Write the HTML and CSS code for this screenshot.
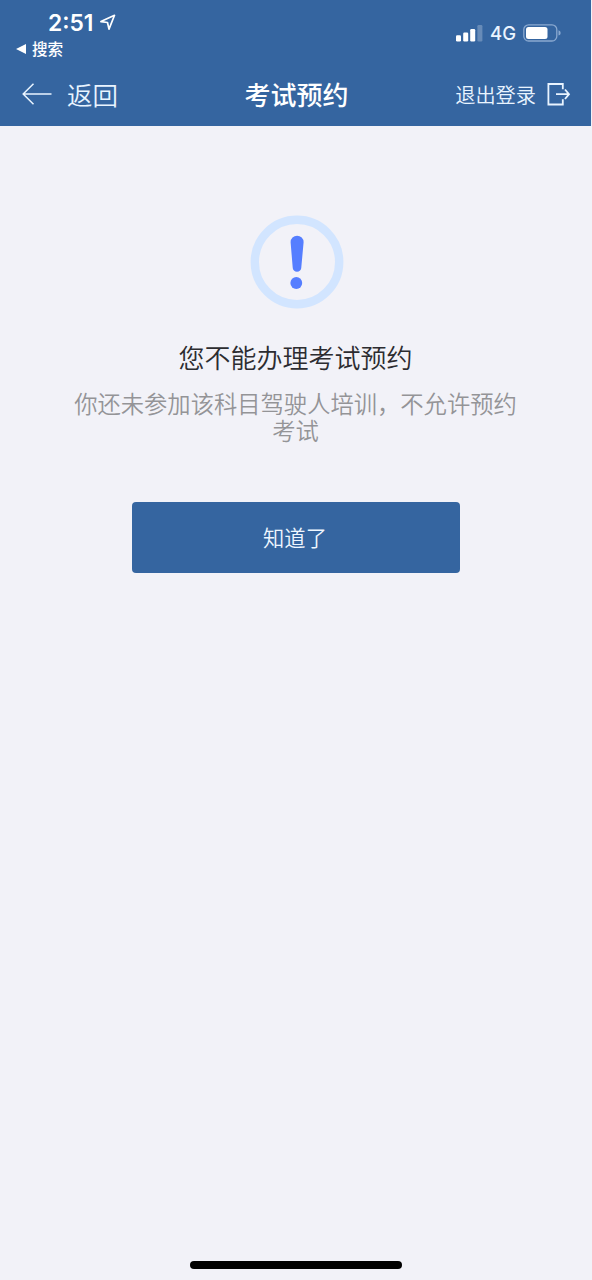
FILE: index.html
```html
<!DOCTYPE html>
<html lang="zh-CN">
<head>
<meta charset="utf-8">
<title>考试预约</title>
<link rel="stylesheet" href="styles.css">
</head>
<body>
<div class="screen">
  <header class="top">
    <div class="status">
      <div class="status-left">
        <div class="clock"><span>2:51</span>
          <svg class="location" width="17" height="17" viewBox="0 0 16 16"><path d="M14.6 1.2 9.4 14.2 8 8 1.8 7.1Z"/></svg>
        </div>
        <div class="return-app">
          <svg width="10" height="10" viewBox="0 0 10 10"><path d="M0 5 10 0V10Z" fill="#fff"/></svg>
          <span>搜索</span>
        </div>
      </div>
      <div class="status-right">
        <svg width="27" height="17" viewBox="0 0 27 17" fill="#fff"><rect y="10.3" width="5" height="6.2" rx="1.2"/><rect x="7.2" y="7.5" width="5" height="9" rx="1.2"/><rect x="14.2" y="4" width="5" height="12.5" rx="1.2"/><rect x="21.4" width="5" height="16.5" rx="1.2" opacity=".25"/></svg>
        <span class="network">4G</span>
        <svg width="38" height="18" viewBox="0 0 38 18"><rect x=".8" y=".8" width="33" height="16.2" rx="4.8" fill="none" stroke="#8aa9d0" stroke-width="1.3"/><rect x="3" y="3" width="21.5" height="12" rx="2.5" fill="#fff"/><path d="M35.5 6.2q2.2.7 2.2 2.7t-2.2 2.7Z" fill="#8aa9d0"/></svg>
      </div>
    </div>
    <nav class="nav">
      <a class="back">
        <svg width="30" height="22" viewBox="0 0 30 22"><path d="M11.5.8 1.2 11 11.5 21.2M1.2 11H29.5"/></svg>
        <span>返回</span>
      </a>
      <h1 class="nav-title">考试预约</h1>
      <a class="logout">
        <span>退出登录</span>
        <svg width="24" height="23" viewBox="0 0 24 23"><path d="M15.8 6.2V1H1.4V21.5H15.8V16.2M9 11.2H21.5M18 6.5 22 11.2 18 16"/></svg>
      </a>
    </nav>
  </header>
  <main class="result">
    <svg class="alert" width="94" height="94" viewBox="0 0 94 94">
      <circle cx="47" cy="47" r="42.2" fill="none" stroke="#d2e5ff" stroke-width="8.4"/>
      <path d="M40.6 27.2a6.5 6.5 0 0 1 13 0L51.3 52.4a4.3 4.3 0 0 1-8.6 0Z" fill="#557eff"/>
      <circle cx="46.3" cy="68" r="5.9" fill="#557eff"/>
    </svg>
    <h2 class="result-title">您不能办理考试预约</h2>
    <p class="message">你还未参加该科目驾驶人培训，不允许预约考试</p>
    <button class="confirm">知道了</button>
  </main>
  <footer class="home"><div class="home-bar"></div></footer>
</div>
</body>
</html>
```
FILE: styles.css
```css
* { box-sizing: border-box; }
body {
  margin: 0;
  background: #f2f2f8;
  font-family: "Noto Sans CJK SC", sans-serif;
}
svg { display: block; flex: none; }
.screen {
  width: 591px;
  height: 1280px;
  display: flex;
  flex-direction: column;
}
.top {
  height: 126px;
  background: #3565a0;
  color: #fff;
}
.status {
  height: 63px;
  display: flex;
  justify-content: space-between;
}
.status-left { padding: 9px 0 0 16px; }
.clock {
  display: flex;
  align-items: center;
  gap: 6px;
  height: 27px;
  padding-left: 32px;
  font: 600 22.8px/27px Inter, sans-serif;
}
.location { fill: none; stroke: #fff; stroke-width: 1.6; stroke-linejoin: round; }
.return-app {
  display: flex;
  align-items: center;
  gap: 6px;
  height: 25px;
  font-size: 15.6px;
  line-height: 25px;
  font-weight: 500;
}
.status-right {
  display: flex;
  align-items: center;
  padding: 3px 30px 0 0;
}
.network {
  width: 26px;
  margin: 0 7px 0 7px;
  font: 500 18.5px/22px Inter, sans-serif;
  color: #eaf4ff;
}
.nav {
  display: grid;
  grid-template-columns: 1fr auto 1fr;
  align-items: center;
  height: 62px;
  padding: 0 20px 0 22px;
}
.back, .logout { display: flex; align-items: center; color: #e9f4ff; font-weight: 350; }
.back { gap: 15px; font-size: 25.5px; line-height: 36px; }
.back svg { fill: none; stroke: #e9f4ff; stroke-width: 1.5; }
.nav-title { margin: 0; font-size: 26px; line-height: 36px; font-weight: 500; }
.logout { justify-content: flex-end; gap: 11px; font-size: 20.2px; line-height: 30px; }
.logout span { padding-top: 1px; }
.logout svg { fill: none; stroke: #e9f4ff; stroke-width: 1.8; }
.result {
  flex: 1;
  display: flex;
  flex-direction: column;
  align-items: center;
  padding-top: 89px;
}
.alert { margin-left: 2px; }
.result-title {
  margin: 29px 0 0;
  font-size: 26px;
  line-height: 38px;
  font-weight: 350;
  color: #2c2c30;
}
.message {
  width: 450px;
  margin: 14px 0 0;
  font-size: 23.3px;
  line-height: 27px;
  font-weight: 350;
  color: #949497;
  text-align: center;
}
.confirm {
  width: 328px;
  height: 71px;
  margin: 58px 0 0 1px;
  padding: 0 2px 2px 0;
  border: 0;
  border-radius: 4px;
  background: #3565a0;
  color: #eef6ff;
  font: 350 21.3px/30px "Noto Sans CJK SC", sans-serif;
}
.home { display: flex; justify-content: center; height: 19px; }
.home-bar { width: 212px; height: 7.5px; border-radius: 4px; background: #000; }
```
